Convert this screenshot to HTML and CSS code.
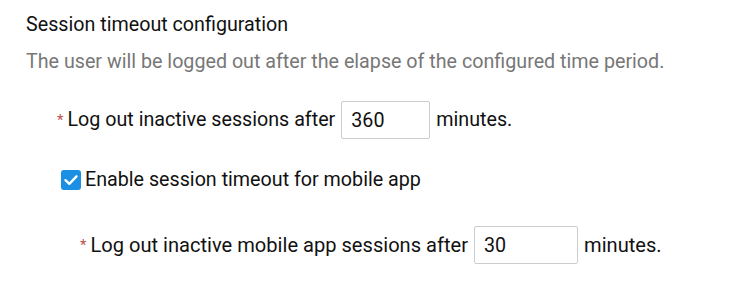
FILE: index.html
```html
<!DOCTYPE html>
<html>
<head>
<meta charset="utf-8">
<link rel="stylesheet" href="styles.css">
</head>
<body>
<div class="panel">
  <div class="title">Session timeout configuration</div>
  <div class="desc">The user will be logged out after the elapse of the configured time period.</div>
  <div class="row row-main">
    <span class="req">*</span>
    <span class="label">Log out inactive sessions after</span>
    <input class="num num-main" type="text" value="360">
    <span class="label">minutes.</span>
  </div>
  <label class="check-row">
    <span class="check">
      <svg width="20" height="20" viewBox="0 0 20 20"><rect x="0" y="0" width="20" height="20" rx="3" fill="#1a8fe3"/><path d="M4.5 10.2 L8.3 13.8 L15.5 6.3" fill="none" stroke="#fff" stroke-width="2.4" stroke-linecap="round" stroke-linejoin="round"/></svg>
    </span>
    <span class="label">Enable session timeout for mobile app</span>
  </label>
  <div class="row row-sub">
    <span class="req">*</span>
    <span class="label label-sub">Log out inactive mobile app sessions after</span>
    <input class="num num-sub" type="text" value="30">
    <span class="label label-sub">minutes.</span>
  </div>
</div>
</body>
</html>
```

FILE: styles.css
```css
html, body {
  margin: 0;
  padding: 0;
  background: #fff;
}
.panel {
  font-family: Roboto, "Liberation Sans", sans-serif;
  padding: 13px 0 0 26px;
  color: #111;
}
.title {
  font-size: 19.7px;
  line-height: 24px;
  color: #111;
}
.desc {
  font-size: 19.7px;
  line-height: 24px;
  color: #777;
  margin-top: 13px;
}
.row {
  display: flex;
  align-items: center;
}
.row-main {
  margin-top: 27px;
  padding-left: 31px;
}
.row-sub {
  margin-top: 34px;
  padding-left: 54px;
}
.req {
  color: #c0504d;
  font-size: 15px;
  margin-right: 4px;
}
.label {
  font-size: 19.7px;
  line-height: 24px;
}
.label-sub {
  font-size: 20.1px;
}
.num {
  box-sizing: border-box;
  height: 38px;
  border: 1px solid #ccc;
  border-radius: 2px;
  font-family: Roboto, "Liberation Sans", sans-serif;
  font-size: 19.7px;
  color: #111;
  padding: 0 9px;
  margin: 0 6px;
  outline: none;
}
.num-main { width: 89px; }
.num-sub { width: 104px; }
.check-row {
  display: flex;
  align-items: center;
  margin-top: 29px;
  padding-left: 35px;
}
.check {
  display: flex;
  width: 20px;
  height: 20px;
  margin-right: 4px;
}
```
